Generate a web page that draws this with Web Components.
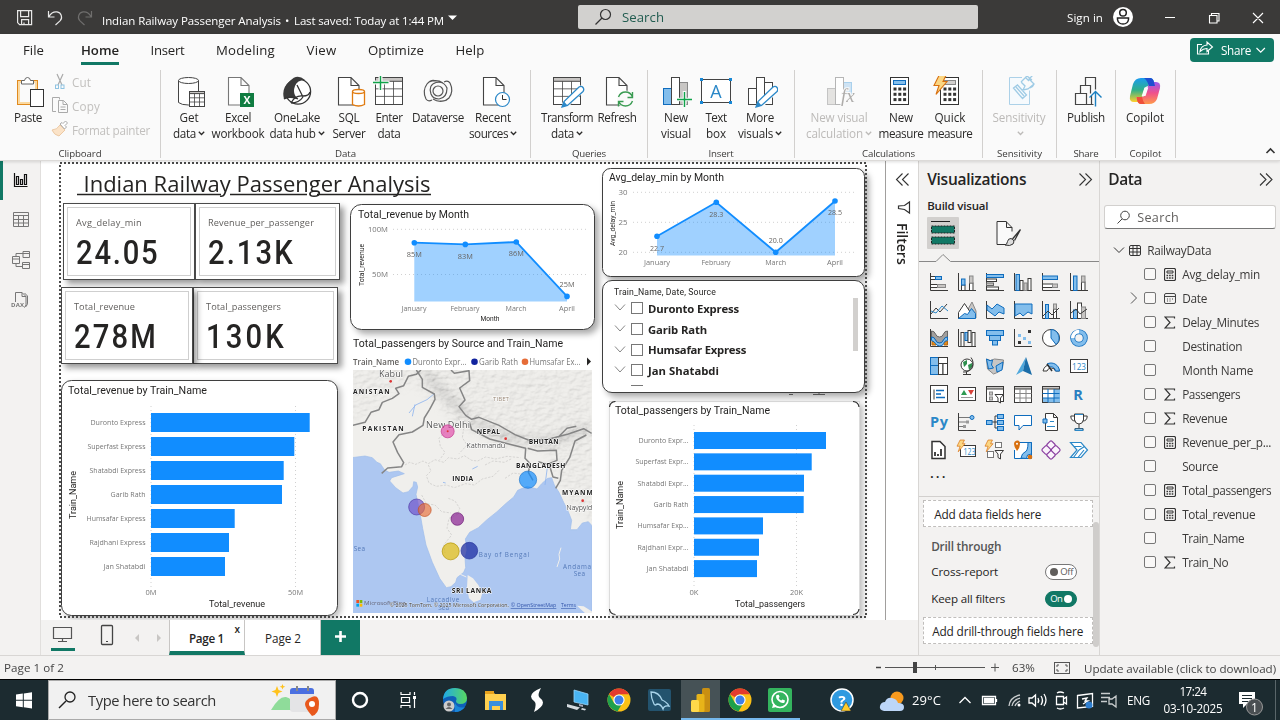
<!DOCTYPE html>
<html lang="en">
<head>
<meta charset="utf-8">
<title>Indian Railway Passenger Analysis</title>
<style>
html,body{margin:0;width:1280px;height:720px;overflow:hidden;background:#f3f2f1}
body{font-family:"Open Sans","Noto Sans",sans-serif;font-size:11.5px;color:#252423}
</style>
</head>
<body>
<report-app></report-app>
<script>
/* ---------- helpers ---------- */
const define = (name, css, html, ready) => customElements.define(name, class extends HTMLElement {
  constructor() {
    super();
    this.attachShadow({ mode: 'open' });
  }
  connectedCallback() {
    if (this.shadowRoot.childNodes.length) return;
    const tpl = document.createElement('template');
    tpl.innerHTML = `<style>:host{display:block;box-sizing:border-box}*{box-sizing:border-box}svg{display:block;flex:none}${css}</style>${typeof html === 'function' ? html(this) : html}`;
    this.shadowRoot.append(tpl.content.cloneNode(true));
    if (ready) ready(this);
  }
});
/* svg whose user space is window coordinates */
const P = (x, y, w, h, body, extra = '') => `<svg width="${w}" height="${h}" viewBox="${x} ${y} ${w} ${h}" fill="none" ${extra}>${body}</svg>`;
const T = (w, s, cls = '') => `<fit-text w="${w}" class="${cls}">${s}</fit-text>`;
/* svg text centred on cy */
const st = (x, cy, w, s, size, o = {}) => `<text x="${x}" y="${cy + size * (o.k || .36)}" font-size="${size}" ${w ? `textLength="${w}" lengthAdjust="${o.sp ? 'spacing' : 'spacingAndGlyphs'}"` : ''} text-anchor="${o.a || 'start'}" fill="${o.c || '#666462'}" ${o.e || ''}>${s}</text>`;
const DIN = 'font-family="Roboto"';

define('fit-text', ':host{display:inline-block;white-space:pre;flex:none}', '<slot></slot>', el => {
  const w = +el.getAttribute('w'), n = el.textContent.length;
  if (!w || !n) return;
  const nat = el.getBoundingClientRect().width;
  el.style.letterSpacing = ((w - nat) / n).toFixed(3) + 'px';
});

/* ---------- title bar ---------- */
define('title-bar', `
:host{display:flex;align-items:center;height:34px;background:#3b3a39;color:#fff}
.name{margin:6px 0 0 8px}.search{margin-left:120px;width:400px;height:24px;background:#d2d1cf;border-radius:2px;display:flex;align-items:center;color:#215c50;font-size:13.2px}
.search fit-text{margin-left:9px}.sign{margin-left:89px}`,
`${P(0,0,94,34,`<g stroke="#e8e8e8" stroke-width="1.2"><path d="M17.6 10.6h14v14h-12l-2-2zM20.6 10.6v6h8v-6M21.6 24.6v-5h7v5M24 24.5v-2"/><path d="M48.5 11v6h6M49 16.5c2-3.500 5-5 8-4.600 4.500.8 6 6 3 9L55.500 25"/></g><path stroke="#6f6e6d" stroke-width="1.200" d="M91.500 11v6h-6M91 16.500c-2-3.500-5-5-8-4.600-4.500.8-6 6-3 9L84.500 25"/>`)}
<div class="name">${T(179,'Indian Railway Passenger Analysis')}${T(13,' • ')}${T(150,'Last saved: Today at 1:44 PM')}</div>
${P(446,0,14,34,'<path d="M450 15.500h9l-4.500 4.500z" fill="#fff"/>')}
<div class="search">${P(591,5,22,24,'<circle cx="605.500" cy="14.500" r="5" stroke="#333" stroke-width="1.200"/><path d="M602 18l-6.500 6.500" stroke="#333" stroke-width="1.300"/>','style="margin-left:13px"')}${T(42,'Search')}</div>
${T(36,'Sign in','sign')}
${P(1103,0,177,34,`<circle cx="1123" cy="17" r="10" fill="#fff"/><g stroke="#222" stroke-width="1.500"><circle cx="1123" cy="12.700" r="3.300"/><path d="M1117.500 18h11v1.500c-1 6-10 6-11 0z"/></g><g stroke="#fff" stroke-width="1.100"><path d="M1165 17.500h10M1209.500 15.500h7.500v7.500h-7.500zM1211.500 15.500v-2h7.500v7.500h-2M1253 13l10 10M1263 13l-10 10"/></g>`)}`);

/* ---------- ribbon ---------- */
const table = (x, y, s, c = '#444', head = '#c8c6c4') => `<rect x="${x}" y="${y}" width="${s}" height="${s}" fill="#fff" stroke="${c}"/><rect x="${x}" y="${y}" width="${s}" height="${s * .14}" fill="${head}" stroke="${c}"/><path stroke="${c}" stroke-width=".8" d="M${x} ${y + s * .42}h${s}M${x} ${y + s * .7}h${s}M${x + s / 3} ${y + s * .14}v${s * .86}M${x + s * 2 / 3} ${y + s * .14}v${s * .86}"/>`;
const page = (x, c = '#444') => `<path d="M${x} 77.500h12.500l8 8v19.500h-20.500zM${x + 12.500} 77.500v8h8" fill="#fff" stroke="${c}" stroke-width="1.100"/>`;
const pencil = (x, y) => `<path d="M${x} ${y}l2-5.500 15-14.500q2.500-1.500 4 .5t0 4l-15.500 14z" fill="#fff" stroke="#2b88c8" stroke-width="1.300"/><path d="M${x} ${y}l2-5.500 3.500 4z" fill="#2b88c8"/>`;
const cal = (x, c = '#333') => { let d = ''; for (let r = 0; r < 3; r++) for (let k = 0; k < 3; k++) d += `<rect x="${x + 3 + k * 4.800}" y="${87.500 + r * 5.300}" width="3" height="3" fill="${c}"/>`; return `<rect x="${x}" y="77.500" width="18" height="27" fill="#fff" stroke="${c}"/><rect x="${x + 3}" y="80.500" width="12" height="4" fill="#83beec" stroke="#0f6cbd"/>${d}`; };
const bolt = (x, y, s) => `<path transform="translate(${x} ${y}) scale(${s})" d="M5 0h7L9 6h4L2 19l3-9H0z" fill="#fbd683" stroke="#d8700f" stroke-width="1.100"/>`;
const RI = {
paste:'<rect x="17.500" y="80.500" width="20" height="24" fill="#fafafa" stroke="#e08a1e"/><rect x="19" y="82" width="17" height="21" stroke="#fbd9a0" stroke-width="2"/><path d="M21.500 84v-3.500h3q.5-3 3-3t3 3h3v3.500z" fill="#fff" stroke="#666"/><rect x="30.500" y="89.500" width="13" height="17" fill="#fff" stroke="#333"/>',
get:`<path d="M178.500 80.500v22q3 2.500 10 2.500h10V80.500" fill="#fff" stroke="#444"/><ellipse cx="188.500" cy="80.500" rx="10" ry="3" fill="#fff" stroke="#444"/>${table(189.500,91.500,15)}`,
excel:`${page(228.500,'#777')}<rect x="240" y="93" width="14" height="14" fill="#107c41"/><text x="247" y="103.800" font-size="10.500" font-weight="700" text-anchor="middle" fill="#fff">X</text>`,
lake:'<circle cx="298" cy="91.500" r="12.600" stroke="#333" fill="#fff" stroke-width="1.300"/><path d="M290 81q7-8 15-1-8 0-10 6-3 8 3 13-9-2-14 0-3-11 6-18z" fill="#3a3a3a"/><path d="M284 99q6-4 14 0M297 85l6 12M291 103q4-8 12-7 6 0 7-4M291 103q8 0 12-6" stroke="#333" stroke-width="1.300"/>',
sql:`${page(338.500)}<path d="M352.500 91.500v13q6 3 12 0v-13" fill="#fff" stroke="#e07b10" stroke-width="1.300"/><ellipse cx="358.500" cy="91.500" rx="6" ry="2" fill="#fff" stroke="#e07b10" stroke-width="1.300"/>`,
enter:`${table(375.500,77.500,27)}<path d="M373.500 82.500h16M380.500 75v15" stroke="#fafafa" stroke-width="4"/><path d="M373 82.500h15.500M380.500 75v15" stroke="#10a34a" stroke-width="1.400"/>`,
verse:'<g stroke="#555" stroke-width="1.200"><circle cx="438" cy="91" r="5"/><path d="M431 94q-3-9 5-11.500 8-1.500 11 5.500 0 10-8 11-6 0-8-5M426 99q-4-8 1-15 4-5 9-3M450 83q4 8-1 15-4 4-9 3M429 82q8-3 14 1M447 100q-8 3-14-1M426 99q2 3 6 1M450 83q-2-3-6-1"/></g>',
recent:`${page(483.500)}<circle cx="502.500" cy="99.500" r="7" fill="#fff" stroke="#2b88c8" stroke-width="1.200"/><path d="M502.500 95v4.500h4" stroke="#333"/>`,
trans:`${table(553.500,77.500,27)}<path d="M564 106l20-19" stroke="#fafafa" stroke-width="7"/>${pencil(562,107)}`,
refresh:`${page(606.500)}<circle cx="625.500" cy="99" r="8.500" fill="#fafafa"/><path d="M618.500 97q2-5 7-5t7 5M632.500 92v5.500h-5M632.500 101q-2 5-7 5t-7-5M618.500 106.500v-5h5" stroke="#3a9b52" stroke-width="1.400"/>`,
newv:'<rect x="663.500" y="88.500" width="8" height="16" fill="#83beec" stroke="#0f6cbd"/><rect x="679.500" y="82.500" width="8" height="22" fill="#c8c6c4" stroke="#888"/><rect x="671.500" y="77.500" width="8" height="27" fill="#fff" stroke="#444"/><path d="M684.500 91v16M677 99.500h15" stroke="#fafafa" stroke-width="3.500"/><path d="M684.500 92v15M677 99.500h15" stroke="#10a34a" stroke-width="1.400"/>',
text:'<rect x="701.500" y="79.500" width="29" height="23" fill="#fff" stroke="#444"/><path d="M700 78h3v3h-3zM729 78h3v3h-3zM700 101h3v3h-3zM729 101h3v3h-3z" fill="#1888d6"/><text x="716" y="98" font-size="18" text-anchor="middle" fill="#2b88c8">A</text>',
more:`<rect x="748.500" y="88.500" width="8" height="16" fill="#fff" stroke="#444"/><rect x="764.500" y="82.500" width="8" height="22" fill="#fff" stroke="#444"/><rect x="756.500" y="77.500" width="8" height="27" fill="#fff" stroke="#444"/><path d="M759 106l18-18" stroke="#fafafa" stroke-width="7"/>${pencil(756,107)}`,
nvc:'<rect x="827.500" y="88.500" width="8" height="16" fill="#e1dfdd" stroke="#bbb"/><rect x="843.500" y="82.500" width="8" height="12" fill="#c7e0f4" stroke="#9cc9ea"/><rect x="835.500" y="77.500" width="8" height="27" fill="#fff" stroke="#aaa"/><text x="841" y="102" font-size="19" font-style="italic" font-family="Liberation Serif" fill="#a19f9d" stroke="#fafafa" stroke-width="2" paint-order="stroke">fx</text>',
measure:cal(890.500),
quick:`${cal(940.500)}<rect x="943.500" y="80.500" width="12" height="4" fill="#d2d0ce" stroke="#888"/>${bolt(934,75.500,1)}`,
sens:'<path d="M1022 77.500h-12.500v27h20v-14" stroke="#9fcbe6" fill="#f6fbfe"/><path d="M1013.500 88l4-3 9 10-4 3.500zM1016 87l8 9M1021 82l4 4-2 4 5-1 6-5-5-5 4-4M1025 77l4 4M1021 82l6-6 5 4M1030 88q3-1 4-4" stroke="#8fc3e2" stroke-width="1.300"/>',
publish:'<path d="M1075.500 104.500h11v-11h-11zM1080.500 93v-7.500h10v8M1086.500 104.500h7M1085.500 85v-7.500h10v12M1091.500 96v8" stroke="#444" stroke-width="1.200"/><path d="M1095.500 106.500V92M1089.500 97.500l6-6 6 6" stroke="#1b7fc0" stroke-width="1.400"/>',
copilot:'<defs><linearGradient id="ca" x1="0" y1="0" x2="0" y2="1"><stop offset="0" stop-color="#1a9bf0"/><stop offset=".5" stop-color="#2fb08a"/><stop offset="1" stop-color="#ffd02b"/></linearGradient><linearGradient id="cb" x1="0" y1="0" x2="0" y2="1"><stop offset="0" stop-color="#9b5cf0"/><stop offset=".5" stop-color="#f0508c"/><stop offset="1" stop-color="#ff9a4a"/></linearGradient></defs><path d="M1141 78h9q3 0 4 4l1 4h-6q-4 0-5 4l-2 8q-1 4-4 4h-4q-5 0-4-6l3-12q2-6 8-6z" fill="url(#ca)"/><path d="M1149 104h-8q-3 0-4-4l-1-3h5q4 0 5-4l2-7q1-4 4-4h4q5 0 4 6l-3 11q-2 5-8 5z" fill="url(#cb)"/><path d="M1144 78h6q3 0 4 4l1 4h-6q-2-6-5-8z" fill="#1f4fd0"/><path d="M1137 97h5q1 5 3 7h-4q-3 0-4-4z" fill="#ef4f3a"/><path d="M1144.500 87.500h3.800l-2.800 8.500h-3.800z" fill="#fafafa"/>'
};
const chev = '<svg class="c" width="7" height="5" viewBox="0 0 7 5" fill="none"><path d="M.8.8l2.700 2.700L6.200.8" stroke="currentColor" stroke-width="1.300"/></svg>';
define('ribbon-button', `
:host{display:flex;flex-direction:column;align-items:center;flex:none;padding-top:6px;font-size:11.700px;color:#2b2a29}
:host([off]){color:#bcbab8}:host([off]) .i{opacity:.85}
.l{height:16px;line-height:16px;display:flex;align-items:center;justify-content:center;white-space:nowrap}.l:first-of-type{margin-top:1px}.c{margin:1px 0 0 2px}`,
el => { const [i, c, w, ml, l1, w1, l2, w2, ch] = el.getAttribute('spec').split('|'); el.style.width = w + 'px'; el.style.marginLeft = ml + 'px';
 return `${P(c - 18,76,36,32,RI[i],'class="i"')}<div class="l">${T(w1, l1)}</div><div class="l">${l2 ? T(w2, l2) : ''}${ch ? chev : ''}</div>`; });
define('ribbon-group', `:host{display:flex;flex-direction:column;flex:none;height:88px;border-right:1px solid #d2d0ce}
.b{display:flex;height:76px;flex:none}.n{height:12px;flex:none;display:flex;justify-content:center;line-height:15px;font-size:9.700px;color:#3b3a39;white-space:nowrap}`,
el => { el.style.width = el.getAttribute('w') + 'px'; return `<div class="b"><slot></slot></div><div class="n">${T(el.getAttribute('nw'), el.getAttribute('name'))}</div>`; });
define('clip-actions', `:host{display:flex;flex-direction:column;margin-left:5px;color:#c2c0be;font-size:11.700px}
div{display:flex;align-items:center;height:24px}fit-text{margin-left:4px}`,
`<div>${P(51,71,17,24,'<path d="M57 75l5 11M63 75l-5 11" stroke="#aaa" stroke-width="1.200"/><rect x="55.500" y="86" width="3" height="3.500" stroke="#8fc3e2"/><rect x="61" y="86" width="3" height="3.500" stroke="#8fc3e2"/>')}${T(19,'Cut')}</div>
<div>${P(51,95,17,24,'<path d="M56 112.500h-3.500v-14h7v2M58.500 101.500h5l4 4v8h-9zM63 101.500v4h4M60.500 108h5M60.500 110.500h5" stroke="#aaa"/>')}${T(28,'Copy')}</div>
<div>${P(51,119,17,24,'<path d="M60 126l5 5-6 6q-5-1-7-6 5 0 8-5z" fill="#fbe3c8" stroke="#ecc9a4"/><path d="M60 125l2-1.500 1 1 2.500-2.500 2 2-2.500 2.500 1.500 1.500-2 2z" fill="#fff" stroke="#aaa"/>')}${T(78,'Format painter')}</div>`);
const rb = (s, off) => `<ribbon-button ${off ? 'off' : ''} spec="${s}"></ribbon-button>`;
define('app-ribbon', `
:host{height:127px;background:#fafafa;border-bottom:1px solid #dcdad8;box-shadow:0 1px 3px #0002;position:relative;z-index:2;display:flex;flex-direction:column}
.tabs{display:flex;height:36px;align-items:flex-start;font-size:13.200px;flex:none}.tabs>*{margin-left:31.500px;height:31px;line-height:33px;border-bottom:3px solid transparent}.tabs>.on{font-weight:600;border-color:#117865}
.tabs>:first-child{margin-left:23px}
.share{margin:4px 6px 0 auto!important;width:84px;height:24px!important;border:0!important;line-height:24px!important;border-radius:4px;background:#117865;color:#fff;display:flex;align-items:center;font-size:11.700px}
.g{display:flex}.up{margin:72px 0 0 auto}`,
`<div class="tabs">${T(21,'File')}<fit-text w="38" class="on" style="margin-left:37px">Home</fit-text>${T(34,'Insert')}${T(59,'Modeling')}${T(30,'View')}${T(56,'Optimize')}${T(29,'Help')}
<div class="share">${P(1190,38,31,24,'<path d="M1202 44.500h-4.500v9.500h11v-3M1200 51.500q1-6 7-6.500v-3l5.500 5-5.500 4.500v-3q-4 0-7 3z" stroke="#fff" stroke-width="1.100"/>')}${T(30,'Share')}${P(1251,38,18,24,'<path d="M1256.500 48l4.200 4.200 4.200-4.200" stroke="#fff" stroke-width="1.200"/>')}</div></div>
<div class="g">
<ribbon-group w="161" name="Clipboard" nw="43">${rb('paste|28|36|10|Paste|28')}<clip-actions></clip-actions></ribbon-group>
<ribbon-group w="370" name="Data" nw="21">${rb('get|189|44|6|Get|19|data|23|1')}${rb('excel|238|54|0|Excel|26|workbook|53')}${rb('lake|297|60|2|OneLake|46|data hub|46|1')}${rb('sql|349|40|2|SQL|21|Server|33')}${rb('enter|389|36|2|Enter|27|data|23')}${rb('verse|438|56|3|Dataverse|52')}${rb('recent|493|52|1|Recent|36|sources|39|1')}</ribbon-group>
<ribbon-group w="117" name="Queries" nw="34">${rb('trans|567|56|8|Transform|52|data|23|1')}${rb('refresh|617|40|2|Refresh|39')}</ribbon-group>
<ribbon-group w="147" name="Insert" nw="25">${rb('newv|676|34|11|New|24|visual|30')}${rb('text|716|34|6|Text|21|box|20')}${rb('more|760|48|3|More|28|visuals|35|1')}</ribbon-group>
<ribbon-group w="188" name="Calculations" nw="53">${rb('nvc|839|70|9|New visual|57|calculation|57|1',1)}${rb('measure|901|48|3|New|24|measure|45')}${rb('quick|950|48|1|Quick|31|measure|45')}</ribbon-group>
<ribbon-group w="74" name="Sensitivity" nw="45">${rb('sens|1019|60|6|Sensitivity|53||0|1',1)}</ribbon-group>
<ribbon-group w="59" name="Share" nw="25">${rb('publish|1086|46|6|Publish|38')}</ribbon-group>
<ribbon-group w="60" name="Copilot" nw="32">${rb('copilot|1145|46|6|Copilot|38')}</ribbon-group>
<div class="up">${P(1264,142,16,16,'<path d="M1266.500 153l4-4 4 4" stroke="#333" stroke-width="1.600"/>')}</div></div>`);

/* ---------- left rail ---------- */
define('nav-rail', `:host{width:41px;border-right:1px solid #e1dfdd;background:#f3f2f1}.a{border-left:3px solid #117865;height:39px}.a svg{margin-left:-3px}`,
`<div class="a">${P(0,161,40,39,'<path d="M14.500 173v13.500h13M16.500 184.500h2v-8h-2zM20.500 184.500h2v-5h-2zM24.500 184.500h2v-10h-2z" stroke="#111" stroke-width="1.200"/>')}</div>
${P(0,200,40,120,'<g stroke="#777"><path d="M13.500 212.500h15v14h-15zM13.500 215.500h15M13.500 219.500h15M13.500 223h15M18.500 215.500v11M23.500 215.500v11M23 251.500h6.500v6H23zM23 253.500h6.500M12.500 256.500h7v7h-7zM12.500 259h7M22.500 262.500h7v6h-7zM22.500 264.500h7M16 256v-2.500h7M16 264v2.500h6.500"/><path d="M15.500 302v-9.500h6.500l4 4v8q0 2-2 3M22 292.500v4h4M24.500 293l3 3v7q0 2-2 4"/></g><text x="11" y="307" font-size="6" font-weight="700" fill="#777" textLength="13">DAX</text>')}`);

/* ---------- report canvas ---------- */
define('kpi-card', `:host{border:1px solid #4a4a4a;background:#fff;padding:3px;height:77px;box-shadow:4px 4px 6px #0006}
.in{border:1px solid #cfcfcf;height:69px;padding:8px 0 0 8px;display:flex;flex-direction:column;align-items:flex-start}
.n{font-size:9.200px;line-height:14px;color:#605e5c}svg{margin-top:4px}`,
el => `<div class="in"><fit-text class="n" w="${el.getAttribute('nw')}">${el.getAttribute('name')}</fit-text><svg width="120" height="32"><text transform="scale(.86 1)" x="0" y="30" ${DIN} font-size="34" fill="#252423" font-weight="500" textLength="${el.getAttribute('vw') / .86 + 2}" lengthAdjust="spacing">${el.getAttribute('value')}</text></svg></div>`);

define('area-chart', ':host{filter:drop-shadow(4px 4px 3px #0005)}', el => {
  const d = el.id === 'rev' ? { x:350,y:204,w:245,h:126,r:11,title:'Total_revenue by Month',tx:358,ty:214.5,tw:111,ax:388,yl:[['100M',229.3,20],['50M',274.5,16]],g:[393,586],pts:[[414.3,242.7],[465.3,244.4],[516.3,242],[567,296.4]],base:301.5,lab:[['85M',254,15],['83M',256,15],['86M',253.5,15],['25M',284,15]],my:308,mx:[[414,25],[465,29],[516,21],[567,16]],yt:['Total_revenue',361,265,42],xt:['Month',490,318.5,19] }
  : { x:602,y:168,w:263,h:109,r:8,title:'Avg_delay_min by Month',tx:609,ty:177.5,tw:115,ax:627.5,yl:[['30',192.3,9],['25',222.3,9],['20',252.3,9]],g:[633,857],pts:[[657,236.3],[716.3,202.3],[775.7,252.3],[835,201]],base:255.5,lab:[['22.7',248,14],['28.3',214,14],['20.0',240,14],['28.5',212,14]],my:262,mx:[[657,26],[716,29],[775.7,21],[835,16]],yt:['Avg_delay_min',612,223.5,45] };
  const p = d.pts.map(a => a.join(' ')).join('L');
  return P(d.x,d.y,d.w,d.h,`<rect x="${d.x+.5}" y="${d.y+.5}" width="${d.w-1}" height="${d.h-1}" rx="${d.r}" fill="#fff" stroke="#3f3f3f"/>
  ${st(d.tx,d.ty,d.tw,d.title,10.8,{c:'#252423',e:DIN})}
  ${d.yl.map(l => st(d.ax,l[1],l[2],l[0],8,{a:'end',c:'#777'}) + `<path d="M${d.g[0]} ${l[1]}H${d.g[1]}" stroke="#d0d0d0" stroke-dasharray="1 3"/>`).join('')}
  <path d="M${p}V${d.base}H${d.pts[0][0]}z" fill="#118dff" fill-opacity=".4"/><path d="M${p}" stroke="#118dff" stroke-width="1.800"/>
  ${d.pts.map((q,i) => `<circle cx="${q[0]}" cy="${q[1]}" r="2.800" fill="#118dff"/>${st(q[0],d.lab[i][1],d.lab[i][2],d.lab[i][0],8,{a:'middle'})}${st(d.mx[i][0],d.my,d.mx[i][1],['January','February','March','April'][i],8,{a:'middle',c:'#777'})}`).join('')}
  <g transform="translate(${d.yt[1]} ${d.yt[2]}) rotate(-90)">${st(0,0,d.yt[3],d.yt[0],7.2,{a:'middle',c:'#252423',e:DIN})}</g>
  ${d.xt ? st(d.xt[1],d.xt[2],d.xt[3],d.xt[0],7.2,{a:'middle',c:'#252423',e:DIN}) : ''}`);
});
define('bar-chart', ':host{filter:drop-shadow(3px 3px 3px #0004)}', el => {
  const one = el.id === 'rev';
  const d = one ? { x:61,y:380,w:277,h:236,title:'Total_revenue by Train_Name',tx:68,ty:390,tw:139,x0:151,ends:[309.7,294.3,283.7,282,234.7,229,225],t0:413,p:24,h2:19,lx:145.5,names:[['Duronto Express',55],['Superfast Express',58],['Shatabdi Express',56],['Garib Rath',35],['Humsafar Express',59],['Rajdhani Express',56],['Jan Shatabdi',42]],ticks:[['0M',151,11],['50M',295.500,15]],gy:[406,588],xt:['Total_revenue',237,604,56],yt:[73,495,48] }
  : { x:609,y:401,w:251,h:215,title:'Total_passengers by Train_Name',tx:615,ty:410.5,tw:155,x0:694,ends:[826,811.7,804,803.7,763,759,757],t0:432,p:21.35,h2:17,lx:688.5,names:[['Duronto Expr...',50],['Superfast Expr...',53],['Shatabdi Expr...',51],['Garib Rath',35],['Humsafar Exp...',51],['Rajdhani Expr...',51],['Jan Shatabdi',42]],ticks:[['0K',694,9],['20K',796.500,13]],gy:[425,587],xt:['Total_passengers',770,604,70],yt:[620,505,48] };
  const frame = one ? `<rect x="61.500" y="380.500" width="276" height="235" rx="10" fill="#fff" stroke="#3f3f3f"/>` : `<path d="M609 401h250v214H609z" fill="#fff"/><path d="M609.500 401v214M859.500 401v214M609 401.500h250" stroke="#dcdcdc"/><path d="M609.500 407q.5-5 6-5.500M853 401.500q5.500.5 6 5.500M609.500 609q.5 5 6 5.500M853 614.500q5.500-.5 6-5.500" stroke="#333" stroke-width="1.200"/>`;
  return P(d.x,d.y,d.w,d.h,`${frame}${st(d.tx,d.ty,d.tw,d.title,10.8,{c:'#252423',e:DIN})}
  ${d.ticks.map(t => `<path d="M${t[1]} ${d.gy[0]}V${d.gy[1]}" stroke="#d0d0d0" stroke-dasharray="1 3"/>${st(t[1],592,t[2],t[0],8,{a:'middle',c:'#777'})}`).join('')}
  ${d.names.map((n,i) => `<rect x="${d.x0}" y="${d.t0+i*d.p}" width="${d.ends[i]-d.x0}" height="${d.h2}" fill="#118dff"/>${st(d.lx,Math.floor(d.t0+i*d.p+d.h2/2),n[1],n[0],8,{a:'end',c:'#777'})}`).join('')}
  ${st(d.xt[1],d.xt[2],d.xt[3],d.xt[0],8.5,{a:'middle',c:'#252423',e:DIN})}
  <g transform="translate(${d.yt[0]} ${d.yt[1]}) rotate(-90)">${st(0,0,d.yt[2],'Train_Name',8.5,{a:'middle',c:'#252423',e:DIN})}</g>`);
});
define('train-slicer', `:host{width:263px;height:113px;border:1px solid #3f3f3f;border-radius:10px;background:#fff;box-shadow:4px 4px 6px #0005;overflow:hidden;padding:5px 0 0 11px}
.h{font:8.700px/12px Roboto;color:#252423;display:flex;height:12px}.r{display:flex;align-items:center;height:20.700px;font-weight:700;font-size:11.300px;color:#252423}
.l{height:88px;overflow:hidden}.r i{width:12px;height:12px;border:1px solid #777;margin:0 5px}.bar{position:absolute;right:6px;top:17px;width:5px;height:53px;background:#d2d0ce}`,
`<div class="h">${T(102,'Train_Name, Date, Source')}</div><div class="l">${[['Duronto Express',91],['Garib Rath',59],['Humsafar Express',98],['Jan Shatabdi',71],['','']].map(r => `<div class="r"><svg width="12" height="12" fill="none"><path d="${r[0] ? 'M1 2.500l5 5.500L11 2.500' : ''}" stroke="#888"/></svg><i></i>${r[0] ? T(r[1], r[0]) : ''}</div>`).join('')}</div><div class="bar"></div>`);

/* map drawn at three units per pixel */
define('bubble-map', ':host{background:#fff}', `
${P(353,336,240,34,`${st(353,343,210,'Total_passengers by Source and Train_Name',10.800,{c:'#252423',e:DIN})}
${st(353,362,46,'Train_Name',8.200,{c:'#605e5c',e:'font-weight="600"'})}<circle cx="408" cy="361.700" r="3.300" fill="#118dff"/>${st(412.500,362,54,'Duronto Expr...',8.300,{c:'#777'})}<circle cx="474.500" cy="361.700" r="3.300" fill="#12239e"/>${st(479,362,39,'Garib Rath',8.300,{c:'#777'})}<circle cx="525" cy="361.700" r="3.300" fill="#e66c37"/>${st(529.500,362,51,'Humsafar Ex...',8.300,{c:'#777'})}<path d="M587 357.500l4 4-4 4z" fill="#252423"/>`)}
<svg width="239" height="243" viewBox="24 15 717 729" fill="none">
<defs><filter id="relief" x="0" y="0" width="100%" height="100%"><feTurbulence type="fractalNoise" baseFrequency=".05 .08" numOctaves="4" seed="8" result="n"/><feDiffuseLighting in="n" surfaceScale="7" lighting-color="#fff"><feDistantLight azimuth="230" elevation="55"/></feDiffuseLighting></filter>
<filter id="soft" x="-20%" y="-20%" width="140%" height="140%"><feGaussianBlur stdDeviation="12"/></filter>
<mask id="hills" maskUnits="userSpaceOnUse" x="24" y="15" width="717" height="729"><g filter="url(#soft)"><path fill="#666" d="M0 -10H741V250L700 190 640 230 560 240 500 245 440 225 380 195 330 180 290 130 240 90 200 50 150 80 100 110 60 150 0 180zM600 250L760 200V480L690 430 640 340z"/><path stroke="#ddd" stroke-width="30" d="M240 20l60 70 70 70 30 20 60 30 70 20 60 5 60-10 50-30 60 0"/></g></mask></defs>
<path fill="#f0efec" d="M24 15h717v729H24z"/>
<g mask="url(#hills)" opacity=".5" style="mix-blend-mode:multiply"><path fill="#fff" d="M24 15h717v729H24z" filter="url(#relief)"/></g>
<path stroke="#999" stroke-width="22" opacity=".3" filter="url(#soft)" d="M240 20l60 70 70 60M380 175l80 30 70 22M550 225l60 5 60-18 60-20"/>
<path fill="#adc7f1" stroke="#9fbcea" stroke-width="2" d="M20 278L60 273 82 278 96 292 106 296 118 314 132 322 160 318 178 326 140 338 134 348 152 368 174 384 190 380 204 364 206 350 214 352 218 366 213 388 218 410 226 450 233 490 243 540 262 592 284 640 304 668 318 665 332 652 336 638 356 622 362 608 360 580 366 555 361 522 374 502 400 488 426 464 456 440 482 416 506 396 518 376 546 364 576 372 590 356 608 340 620 338 628 360 642 382 656 412 670 440 680 466 676 494 696 494 712 474 730 470 741 482V750H20z"/>
<path fill="#f0efec" d="M368 630L384 640 400 660 412 684 406 704 386 712 372 700 366 668zM696 722l20 2 26 16v6h-20z"/>
<path stroke="#f0efec" stroke-width="3" d="M648 548l-6 20 2 14-8 24M346 628l18 8"/>
<g stroke="#c8c7c5" stroke-width="2" stroke-dasharray="7 4"><path d="M180 300l14-8 18 6 22-10 16 8 20-12 26 8 14-14 28 4 20-10 22 14 18 2 24-12 30 6 34-8 40 4M250 300l8 18-14 14 8 22 22 10 30-4 24 8 34-12 26 4 24-18 32-8 20-20M310 400l20 8 14 22-6 18-26 12-6 30 14 20-24 30 4 24M420 300l24-12 34 4 24-12M230 390l14 26 26 4 20 20 28 4M300 200l-18 20 4 24 14 18-16 22M480 340l24-16 30 4 16-10M340 160l16 30-4 28 14 22-24 26"/></g>
<path stroke="#8fb4ee" stroke-width="2.500" d="M268 86l-22 18-34 16-20 24M210 118l-8 36M382 312l16-8M294 352l8 2M600 360l8-60"/>
<g stroke="#858585" stroke-width="4.500" stroke-linejoin="round"><path d="M20 182l40-10 18-30 24-8 10-22 30-12 20-14-10-16 24-8 14-28 24-6 14-13M214 15l18 28 0 24 36 20 2 16-16 30-16 26-4 22-32 20-40 8-18 22 14 32 18 30-6 12-42 4-18 16"/><path d="M318 15l10 10 44-8 2 30-30 22 16 36-18 20 20 26 18 12 22-6 60 24 48 28 40 16 60-2 60-16 46-16 24 14M372 168l8 26 54 28 60 16 48 12-2 30 16 16-6 26 14 24M548 250l30 8 56-2 2 30-24 10 12 40 16 4M580 290l42 12M724 210l-34 18-16 50-24 38-4 30-14 24M640 216l26-26 28-6"/></g>
<g font-family="Open Sans" stroke="#fff" stroke-width="3" paint-order="stroke" stroke-linejoin="round">
${[['ANISTAN',24,81,110],['PAKISTAN',52,190,124],['NEPAL',395,201,70],['BHUTAN',551,231,90],['INDIA',322,340,62],['BANGLADESH',513,302,148],['MYANMAR',651,382,125],['SRI LANKA',320,676,119]].map(m => st(m[1],m[2],m[3],m[0],20,{sp:1,c:'#222',e:'font-weight="700"'})).join('')}
${[['Kabul',102,27,72,27],['New Delhi',243,178,132,27],['Kathmandu',364,242,117,22],['Naypyidaw',664,426,105,22]].map(m => st(m[1],m[2],m[3],m[0],m[4],{sp:1,c:'#555'})).join('')}${st(444,104,48,'TIBET',15,{c:'#987'})}</g>
<g fill="#d33"><circle cx="137" cy="49" r="4"/><circle cx="482" cy="221" r="4"/><circle cx="713" cy="407" r="4"/></g>
${[['Bay of Bengal',401,570,152],['Andaman',654,605,98],['Sea',686,626,34],['Sea',26,552,34],['Laccadive',245,704,98],['Sea',280,728,32]].map(m => st(m[1],m[2],m[3],m[0],19,{sp:1,c:'#5479b8'})).join('')}
<g stroke-width="2"><circle cx="308" cy="199" r="19.500" fill="#e044a7" fill-opacity=".65" stroke="#c0358c"/><circle cx="549" cy="344" r="26" fill="#118dff" fill-opacity=".7" stroke="#2277cc"/><circle cx="215" cy="426" r="24" fill="#6b4bc8" fill-opacity=".65" stroke="#5240a8"/><circle cx="239" cy="435" r="19.500" fill="#e66c37" fill-opacity=".65" stroke="#c25020"/><circle cx="337" cy="462" r="19" fill="#871f91" fill-opacity=".7" stroke="#6b1a74"/><circle cx="317" cy="559" r="25.500" fill="#d9b300" fill-opacity=".65" stroke="#b09200"/><circle cx="373" cy="557" r="25" fill="#12239e" fill-opacity=".7" stroke="#25349a"/></g><circle cx="308" cy="199" r="3" fill="#d33"/>
<path fill="#f25022" d="M34 705h8v9h-8z"/><path fill="#7fba00" d="M44 705h8v9h-8z"/><path fill="#00a4ef" d="M34 716h8v9h-8z"/><path fill="#ffb900" d="M44 716h8v9h-8z"/>
${st(57,715,125,'Microsoft Bing',17,{c:'#667'})}${st(134,720,358,'© 2025 TomTom, © 2025 Microsoft Corporation,',18,{c:'#333',e:'stroke="#fff" stroke-width="1" paint-order="stroke"'})}${st(497,720,137,'© OpenStreetMap',18,{c:'#3355aa',e:'text-decoration="underline"'})}${st(648,720,45,'Terms',18,{c:'#3355aa',e:'text-decoration="underline"'})}
</svg>`);

define('report-canvas', `:host{position:relative;height:459px;background:#fff;overflow:hidden}
kpi-card,area-chart,bar-chart,train-slicer,bubble-map,.a{position:absolute}`,
() => { const at = (x, y) => `style="left:${x - 41}px;top:${y - 161}px"`, at2 = (x, y, w) => `style="left:${x - 41}px;top:${y - 161}px;width:${w}px"`;
return `<div class="a" ${at(77,169)}>${P(77,169,360,32,`<text x="83.500" y="192.300" font-size="22" fill="#252423" textLength="347" lengthAdjust="spacingAndGlyphs">Indian Railway Passenger Analysis</text><path d="M77 194.500H221M230 194.500H307M317 194.500H431" stroke="#252423" stroke-width="1.300"/>`)}</div>
<bubble-map ${at(353,336)}></bubble-map>
<kpi-card ${at2(63,203,132)} name="Avg_delay_min" nw="66" value="24.05" vw="80"></kpi-card><kpi-card ${at2(195,203,145)} name="Revenue_per_passenger" nw="106" value="2.13K" vw="83"></kpi-card>
<kpi-card ${at2(193,287,145)} name="Total_passengers" nw="75" value="130K" vw="76"></kpi-card><kpi-card ${at2(61,287,132)} name="Total_revenue" nw="61" value="278M" vw="80"></kpi-card>
<area-chart id="rev" ${at(350,204)}></area-chart><area-chart id="delay" ${at(602,168)}></area-chart>
<bar-chart id="rev" ${at(61,380)}></bar-chart><bar-chart id="pas" ${at(609,401)}></bar-chart>
<train-slicer ${at(602,280)}></train-slicer>
<div class="a" style="left:0;top:0">${P(41,161,844,459,'<rect x="60" y="163" width="806" height="454" stroke="#4a4a4a" stroke-width="2" stroke-dasharray="2 2"/><path d="M789 394.500h4M813 394.500h12M819 393v2" stroke="#555"/>')}</div>`; });

define('page-tabs', `:host{display:flex;height:35px;background:#f3f2f1;font-size:11.700px}
.p{width:76px;height:35px;background:#fff;border-right:1px solid #c8c6c4;display:flex;align-items:center;padding:0 0 0 20px;position:relative}.on{border-left:1px solid #c8c6c4;border-bottom:4px solid #117865;font-weight:600;padding-top:4px;padding-left:19px}
.x{position:absolute;right:4px;top:1px;font-size:10px;line-height:16px}.add{width:39px;background:#117865}`,
`${P(41,620,128,35,'<path d="M53.500 627.500h18v11h-18zM62.500 638.500v3M58 641.500h9" stroke="#555" stroke-width="1.200"/><path d="M51 648h24v3H51z" fill="#117865"/><rect x="101.500" y="625.500" width="11" height="19" rx="1" stroke="#444" stroke-width="1.300"/><path d="M106 641.500h2" stroke="#444"/><path d="M139 634v8l-4-4zM157 634v8l4-4z" fill="#c8c6c4"/>')}
<div class="p on">${T(35,'Page 1')}<span class="x">x</span></div><div class="p">${T(36,'Page 2')}</div><div class="add">${P(321,620,39,35,'<path d="M335 636.500h11M340.500 631v11" stroke="#fff" stroke-width="2.600"/>')}</div>`);

/* ---------- panes ---------- */
define('filters-pane', `:host{width:33px;height:459px;border-left:1px solid #a19f9d;background:#fff}.v{writing-mode:vertical-rl;font-weight:600;font-size:14px;line-height:20px;margin:2px 0 0 6px}`,
`${P(886,161,32,60,'<path d="M902.500 173.500l-6 6 6 6M908.500 173.500l-6 6 6 6" stroke="#333" stroke-width="1.100"/><path d="M909.500 202v11l-5-3.500-6-1v-2.500l6-.5z" stroke="#333" stroke-width="1.200"/>')}<div class="v">Filters</div>`);

const B='#0f6cbd', L='#83beec', K='#3b3a39', G='#c8c6c4';
const r = (x,y,w,h,f='#fff',s=K) => `<rect x="${x}" y="${y}" width="${w}" height="${h}" fill="${f}" stroke="${s}"/>`;
const ax = '<path d="M.5 0v17.500H18" stroke="#3b3a39"/>';
const fun = '<path d="M9 9.500h8.500l-3 3.500v5l-2.500-1.500V13z" fill="#fff" stroke="#3b3a39"/>';
const V = [
 ax+r(.5,3.5,5,3)+r(5.5,3.5,6,3,L,B)+r(.5,11.500,7,3)+r(7.500,11.500,8,3,G,'#888'),
 ax+r(3.500,12,3.500,5.500)+r(3.500,6,3.500,6,L,B)+r(11.500,10,3.500,7.500)+r(11.500,3,3.500,7,G,'#888'),
 ax+r(.5,1.500,17,3,L,B)+r(.5,6,10,2.500)+r(.5,10,7,2.500,G,'#666')+r(.5,14,12,3),
 ax+r(2,1.500,3.500,16,L,B)+r(6,7.500,3,10)+r(10,10,3,7.500,G,'#888')+r(14,5.500,3,12),
 ax+r(.5,3,15,3.500,L,B)+r(.5,11,10,3.500)+r(10.500,11,5,3.500,G,'#888'),
 ax+r(3.500,3,3.500,14.500,L,B)+r(11.500,9,3.500,8.500)+r(11.500,3,3.500,6,G,'#888'),
 ax+'<path d="M1 13l5-6 4 4 7-8" stroke="#3b3a39"/><path d="M1 10l5 2 6-7 6 5" stroke="#2b88c8"/>',
 '<path d="M8 12l6-11 4 9v7z" fill="#c8c6c4" stroke="#888"/><path d="M.5 17.500v-6l6-9 6 9v6z" fill="#fff" stroke="#3b3a39"/><path d="M.5 17.500l6-5 3 1 4-6 4 5v5z" fill="#83beec" stroke="#0f6cbd"/>',
 ax+'<path d="M1 4l5 4 5-5 7 4v6l-5-2-4 4-8-6z" fill="#83beec" stroke="#0f6cbd"/>',
 ax+'<path d="M1 3h17v10l-4-2-5 4-3-3-5 3z" fill="#83beec" stroke="#0f6cbd"/>',
 ax+r(3.500,3.500,3,14,L,B)+r(11.500,8,3,9.500)+r(11.500,3,3,5,G,'#888')+'<path d="M1 15l5-5 4 4 7-7" stroke="#3b3a39"/>',
 ax+r(3.500,9,4,8.500,L,B)+r(7.500,2,4,15.500)+r(11.500,6,4,11.500,G,'#888')+'<path d="M1 12l5-4 4 5 7-5" stroke="#3b3a39"/>',
 '<path d="M.5 0v17.500H18" stroke="#3b3a39"/><path d="M1.500 2q3 0 4 3t4 3 4-3 4-3v6q-3 0-4 3t-4 3-4-3-4-3z" fill="#a19f9d" stroke="#666"/><path d="M2 12h4v4H2zM14 12h3.500v4H14z" fill="#e08a1e" stroke="#b86a10"/><path d="M1.500 8q3 0 4 3t4 3 4-3 4-3v3.500q-3 0-4 3t-4 2.500-4-2.500-4-3z" fill="#83beec" stroke="#0f6cbd"/>',
 ax+r(3,3.500,3,14)+r(7,3.500,3,8,L,B)+r(10,1.500,3,12)+r(14,3.500,3,14),
 r(.5,1.500,17,5,L,B)+r(3.500,6.500,11,5,L,B)+r(6.500,11.500,5,4.500,L,B),
 ax+'<g fill="#83beec"><path d="M4 5h3v3H4zM9 8h3v3H9zM14 12h3v3h-3z"/></g><path d="M14 1h3v3h-3zM4 12h3v3H4z" fill="#333"/>',
 '<circle cx="9" cy="9" r="8.500" fill="#fff" stroke="#3b3a39"/><path d="M9 9V.5a8.500 8.500 0 0 1 5 15z" fill="#83beec" stroke="#0f6cbd"/>',
 '<circle cx="9" cy="9" r="6.300" stroke="#0f6cbd" stroke-width="5"/><circle cx="9" cy="9" r="6.300" stroke="#83beec" stroke-width="3.400"/><path d="M9 2.500A6.300 6.300 0 0 0 2.700 9" stroke="#fff" stroke-width="3.400"/>',
 r(.5,.5,8,8,L,B)+r(8.500,.5,9,6)+r(.5,8.500,8,9,L,B)+r(8.500,6.500,4.500,11)+r(13,6.500,4.500,11),
 '<circle cx="9" cy="8" r="6" fill="#fff" stroke="#3b3a39"/><path d="M5 5l4-2v4l-3 3zM10 8l4-2v4l-3 3z" fill="#2f8f4e"/><path d="M13 .5a9 9 0 0 1-8 14.500M8.500 15v2.500M5 17.500h8" stroke="#3b3a39"/>',
 '<path d="M.5 2q4 3 8 0l9 1-1 8-4 4-5 2-6-5z" fill="#c8c6c4" stroke="#888"/><path d="M.5 2q4 3 6 1l-1 5 2 3-5 1zM10 9l7-4-1 8-5 2z" fill="#83beec" stroke="#0f6cbd"/>',
 '<path d="M12 0L2 18l7-4z" fill="#4fa8dc"/><path d="M12 0l6 18-9-4z" fill="#1b6da8"/>',
 '<path d="M1 14a8.500 8.500 0 0 1 16.500 0h-4a4.500 4.500 0 0 0-8.500 0z" fill="#fff" stroke="#3b3a39"/><path d="M5 7a8.500 8.500 0 0 1 12.500 7h-4a4.500 4.500 0 0 0-6-4z" fill="#83beec" stroke="#0f6cbd"/><path d="M5 7l5 7" stroke="#333" stroke-width="1.500"/>',
 r(.5,2.500,17,13)+'<text x="9" y="12.500" font-size="9.500" text-anchor="middle" fill="#2b88c8" textLength="14" lengthAdjust="spacingAndGlyphs">123</text>',
 r(.5,.5,17,17)+'<path d="M4 4.500v10" stroke="#3b3a39"/><path d="M6 5.500h8M6 9h5M6 12.500h9" stroke="#0f6cbd" stroke-width="1.600"/>',
 r(.5,2.500,17,13)+'<path d="M3 10l3-5 3 5z" fill="#2f9b52"/><path d="M10 5h6l-3 5z" fill="#d8423a"/><path d="M3 12.500h12" stroke="#999"/>',
 r(.5,1.500,17,15)+r(.5,1.500,17,2.500,G)+r(3.500,7,3,3,G,'#888')+r(3.500,12,3,3,G,'#888')+fun,
 r(.5,1.500,17,16)+r(.5,1.500,17,2.500,G)+'<path d="M.5 8.500h17M.5 13h17M6 4v13.500M12 4v13.500" stroke="#888"/>',
 r(.5,1.500,17,16)+'<path d="M6 13h12v4.500H6zM12 4h6v9h-6z" fill="#83beec"/><path d="M1 13h5v4H1z" fill="#83beec"/>'+r(.5,1.500,17,2.500,G)+'<path d="M.5 8.500h17M.5 13h17M6 4v13.500M12 4v13.500" stroke="#0f6cbd"/>',
 '<text x="8" y="14.500" font-size="14.500" font-weight="700" text-anchor="middle" fill="#2b7fc0">R</text>',
 '<text x="9" y="14" font-size="14.500" font-weight="700" text-anchor="middle" fill="#2b88c8" textLength="18">Py</text>',
 ax+'<path d="M1 4.500h11M1 9h7M1 13.500h4" stroke="#777"/><circle cx="14" cy="4.500" r="2" fill="#83beec" stroke="#0f6cbd"/><rect x="8" y="7.500" width="3" height="3" fill="#999"/><rect x="5" y="12" width="3" height="3" fill="#999"/>',
 '<path d="M6 9h6M9 3h3M9 15h3M9 3v12" stroke="#3b3a39"/>'+r(.5,7.500,5.500,4,L,B)+r(11.500,1.500,6,4,L,B)+r(11.500,7.500,6,4,L,B)+r(11.500,13.500,6,4,L,B),
 '<path d="M.5 2.500h17v10H9l-4 4.500v-4.500H.5z" fill="#fff" stroke="#0f6cbd"/>',
 '<path d="M3.500 17.500V.5h8l4 4v13zM11.500.5v4h4" fill="#fff" stroke="#3b3a39"/><path d="M1 6h4v4H1z" fill="#83beec" stroke="#0f6cbd"/><path d="M8 8.500h4M5 13.500h8" stroke="#2b88c8"/>',
 '<path d="M4.500 1h9v6q-1 4-4.500 4T4.500 7zM4.500 3H.8q0 5 4.500 5M13.500 3h3.700q0 5-4.500 5M9 11v4M5 17.500v-2h8v2z" fill="#fff" stroke="#3b3a39"/><path d="M5 16h8v1.500H5zM5 1.500h8" stroke="#2b88c8"/>',
 '<path d="M2 17.500V.5h8l5 5v12z" fill="#fff" stroke="#333" stroke-width="1.500"/><path d="M5 15v-4M8 15v-2M11 15V8" stroke="#333" stroke-width="1.800"/>',
 r(2.500,4.500,15,11)+'<text x="11.500" y="13.800" font-size="9" text-anchor="middle" fill="#2b88c8" textLength="12" lengthAdjust="spacingAndGlyphs">123</text>'+bolt(-1,-1,.62),
 r(9.500,1.500,6,5,'#fff','#777')+r(1.500,10.500,6,6,'#fff','#777')+fun+bolt(-1,-1,.62),
 '<path d="M5 1.500h12.500v16H.5V9" fill="#fff" stroke="#0f6cbd"/><path d="M7 17q1-5 4-6t3-9.500h3.500V13l-4 1-1 3.500z" fill="#83beec" stroke="#0f6cbd"/><path d="M3 10Q0 6 0 3t3-3.500T6 3 3 10z" fill="#d8700f"/><circle cx="3" cy="2.800" r="1" fill="#fff"/><circle cx="16" cy="16" r="2.300" fill="#d8700f"/>',
 '<g stroke="#8a3fa0" stroke-width="1.200" fill="#faf2fb"><rect x="5.500" y=".8" width="7" height="7" rx="1.500" transform="rotate(45 9 4.300)"/><rect x="5.500" y="10.200" width="7" height="7" rx="1.500" transform="rotate(45 9 13.700)"/><rect x=".8" y="5.500" width="7" height="7" rx="1.500" transform="rotate(45 4.300 9)"/><rect x="10.200" y="5.500" width="7" height="7" rx="1.500" transform="rotate(45 13.700 9)"/></g>',
 '<path d="M.5 1.500h10.500L17.500 9 11 16.500H.5L7 9zM4 5.500h7.500M9 9l5.500-3.500M9 9l-5.500 7.500M14 9l-6 7.500" fill="#fff" stroke="#2b88c8" stroke-width="1.200"/>'
];
define('viz-pane', `:host{width:182px;height:494px;background:#f3f2f1;border-left:1px solid #d8d6d4;border-right:1px solid #d8d6d4;padding:0;position:relative;display:flex;flex-direction:column}
.h{display:flex;align-items:center;height:36px;padding:0 4px 0 8px;font-size:15.500px;font-weight:600;justify-content:space-between}
.b{font-weight:600;padding-left:8px;height:19px;line-height:17px}
.grid{display:grid;grid-template-columns:repeat(6,28px);grid-auto-rows:28px;padding:6px 0 0 6px;place-items:center;height:203px}
.grid svg{overflow:visible}.dots{height:32px;padding:0 0 0 11px;letter-spacing:2.600px;font-weight:700;line-height:18px;border-bottom:1px solid #d2d0ce}
.w{background:#fff;border:1px dashed #c0bebc;width:170px;height:27px;margin:3px 0 0 4px;display:flex;align-items:center;padding-left:10px;flex:none;font-size:11.800px}
.r{display:flex;align-items:center;justify-content:space-between;padding:0 22px 0 12px;height:27px;font-size:11.600px}
.d{font-weight:600;color:#555;height:23px;padding-left:12px;line-height:22px;margin-top:8px;font-size:11.800px}
.tg{width:32px;height:16px;border:1px solid #777;border-radius:9px;display:flex;align-items:center;font-size:9.500px;line-height:12px;background:#fff;padding:0 4px;gap:2px;color:#605e5c}
.tg i{width:8px;height:8px;flex:none;border-radius:50%;background:#605e5c}.on{background:#117865;color:#fff;border-color:#117865}.on i{background:#fff}
.sb{position:absolute;right:0;top:361px;width:6px;height:125px;border-radius:3px;background:#cfcdcb}`,
`<div class="h">${T(99,'Visualizations')}${P(1075,167,20,24,'<path d="M1079.500 173.500l6 6-6 6M1085.500 173.500l6 6-6 6" stroke="#333" stroke-width="1.100"/>')}</div>
<div class="b">${T(61,'Build visual')}</div>
${P(919,216,180,46,'<rect x="927" y="217" width="32" height="32" fill="#d2d0ce" rx="1"/><path d="M931 221.500h19" stroke="#222"/><path d="M931.500 226h23v7h-23zM931.500 237h23v7h-23z" fill="#117865" stroke="#222" stroke-dasharray="2 1"/><path d="M1010 244.500h-13v-23h9l6 6v4M1006.500 221.500v6h5.500" stroke="#333" fill="#fafafa"/><path d="M1020.500 229.500l-8 9.500M1020.500 229.500l-6 11" stroke="#333" stroke-width="1.300"/><path d="M1011 238.500q-3 0-3.500 3t-2.500 3.500q5 1.500 8-1 1.500-2 .5-4z" fill="#ddd" stroke="#333"/><path d="M919 261.500h17l7-7 7.500 7h149" stroke="#888"/>')}
<div class="grid">${V.map(v => `<svg width="18" height="18" viewBox="0 0 18 18" fill="none">${v}</svg>`).join('')}</div>
<div class="dots">...</div>
<div class="w">${T(107,'Add data fields here')}</div>
<div class="d">${T(70,'Drill through')}</div>
<div class="r">${T(67,'Cross-report')}<span class="tg"><i></i>${T(13,'Off')}</span></div><div class="r">${T(74,'Keep all filters')}<span class="tg on">${T(12,'On')}<i></i></span></div>
<div class="w" style="margin-top:5px;padding-left:8px">${T(151,'Add drill-through fields here')}</div><div class="sb"></div>`);

const calc = '<rect x=".5" y=".5" width="11" height="12" rx="1.500" stroke="#333" stroke-width="1.200"/><path d="M3 3h6v2H3z" stroke="#333"/><path d="M2.500 7.500h7M2.500 10h7" stroke="#333" stroke-width="1.300" stroke-dasharray="1.600 1"/>';
const sig = '<path d="M10.500 2.500V1H1l5 5.500L1 12h9.500v-1.500" stroke="#333" stroke-width="1.200"/>';
const date = '<rect x=".5" y="1.500" width="11" height="10" rx="1.500" stroke="#444"/><path d="M.5 4.500h11M3 7h1M5.500 7h1M8 7h1M3 9h1M5.500 9h1" stroke="#444"/>';
define('data-pane', `:host{width:180px;height:494px;background:#f3f2f1;font-size:11.800px;color:#3b3a39}
.h{display:flex;align-items:center;height:36px;padding-left:8px;font-size:15.500px;font-weight:600;justify-content:space-between;color:#252423}
.s{margin:8px 0 9px 4px;width:172px;height:24px;background:#fff;border:1px solid #d2d0ce;border-bottom-color:#777;border-radius:3px;display:flex;align-items:center;font-size:12.600px;color:#605e5c}
.r{display:flex;align-items:center;height:24px}.r i{width:12px;height:12px;border:1px solid #777;border-radius:2px;background:#f9f8f7}.r .ic{margin:0 6px 0 8px}`,
`<div class="h">${T(34,'Data')}${P(1256,167,24,24,'<path d="M1260 173.500l6 6-6 6M1266 173.500l6 6-6 6" stroke="#333" stroke-width="1.100"/>')}</div>
<div class="s">${P(1105,206,30,22,'<circle cx="1125" cy="215.500" r="4.300" stroke="#444"/><path d="M1122 219l-4.500 4.500" stroke="#444"/>')}<fit-text w="42" style="margin-left:2px">Search</fit-text></div>
<div class="r">${P(1100,238,46,24,'<path d="M1114 247.500l5 5 5-5" stroke="#333"/><rect x="1129.500" y="245.500" width="11" height="10" rx="1.500" stroke="#333"/><path d="M1129.500 248.500h11M1129.500 252h11M1133 245.500v10M1137 245.500v10" stroke="#333"/>')}<fit-text w="64" style="margin-left:1px">RailwayData</fit-text></div>
${[['Avg_delay_min',78,calc],['Date',25,date,1],['Delay_Minutes',77,sig],['Destination',60,''],['Month Name',71,''],['Passengers',58,sig],['Revenue',45,sig],['Revenue_per_p...',89,calc],['Source',36,''],['Total_passengers',89,calc],['Total_revenue',73,calc],['Train_Name',62,''],['Train_No',46,sig]].map(f => `<div class="r"><svg width="44" height="24" fill="none">${f[3] ? '<path d="M31 6.500l5.500 5.500-5.500 5.500" stroke="#555"/>' : ''}</svg><i></i><svg class="ic" width="12" height="13" fill="none">${f[2]}</svg>${T(f[1], f[0])}</div>`).join('')}`);

define('status-bar', `:host{display:flex;align-items:center;height:25px;border-top:1px solid #d8d6d4;border-bottom:1px solid #000;background:#f3f2f1;color:#444;font-size:11.600px;padding-left:4px}`,
`${T(60,'Page 1 of 2')}<span style="flex:1"></span>${P(872,656,132,23,'<path d="M876 667.500h5" stroke="#444" stroke-width="1.500"/><path d="M885 667.500h100M935.500 665v5M991 667.500h8M995 663.500v8" stroke="#555"/><path d="M913 662h4v11h-4z" fill="#444"/>')}<fit-text w="23" style="margin:0 18px 0 8px">63%</fit-text>${P(1053,656,20,23,'<rect x="1054.500" y="662.500" width="15" height="11" stroke="#555"/><path d="M1057 667v-2h2M1065 665h2v2M1067 669v2h-2M1059 671h-2v-2" stroke="#555"/>')}<fit-text w="192" style="margin:1px 4px 0 11px">Update available (click to download)</fit-text>`);

/* ---------- taskbar ---------- */
const chrome = x => `<circle cx="${x}" cy="700" r="11.500" fill="#fbc116"/><path d="M${x-10} 694.200a11.500 11.500 0 0 1 20 0H${x}a6 6 0 0 0-5 3z" fill="#e33b2e"/><path d="M${x-10} 694.200a11.500 11.500 0 0 0 8.500 17.200l5-8.400a6 6 0 0 1-8.500 0z" fill="#1ea04c"/><circle cx="${x}" cy="700" r="5.600" fill="#fff"/><circle cx="${x}" cy="700" r="4.500" fill="#3f7fe8"/>`;
define('task-bar', `:host{display:flex;height:40px;background:#1c2b30;color:#fff;align-items:center;font-size:13px}
.s{width:288px;height:40px;background:#f1f1f1;border:1px solid #aaa;display:flex;align-items:center;justify-content:space-between;color:#333;font-size:14.700px}.hot{background:#465256}.u{box-shadow:inset 0 -2px #76b9ed}
.ck{display:flex;flex-direction:column;align-items:center;width:60px;margin-left:13px;font-size:11.700px}.ck *{line-height:17px}`,
`${P(0,680,48,40,'<path fill="#fff" d="M16 694.500l6.800-1v6.300H16zM23.800 693.400l8.200-1.200v7.600h-8.200zM16 700.800h6.800v6.400l-6.800-1zM23.800 700.800H32v7.700l-8.200-1.200z"/>')}
<div class="s">${P(50,681,36,38,'<circle cx="71" cy="697" r="5" stroke="#222" stroke-width="1.300"/><path d="M67 701l-7 7" stroke="#222" stroke-width="1.400"/>')}<fit-text w="128" style="margin-left:3px">Type here to search</fit-text>
${P(269,681,56,38,'<path d="M272 710q8-14 15-13t9 13z" fill="#8fdc9a"/><path d="M278 686l1.500 4 4 1.500-4 1.500-1.500 4-1.500-4-4-1.500 4-1.500zM283.500 684l.8 2 2 .8-2 .8-.8 2-.8-2-2-.8 2-.8z" fill="#ffc21c"/><rect x="291" y="688" width="24" height="24" rx="3" fill="#e4e4e6"/><path d="M291 694v-3q0-3 3-3h18q3 0 3 3v3z" fill="#4a6fe0"/><path d="M298 686v5M309 686v5" stroke="#888" stroke-width="2"/><path d="M313 716q-7-8-7-12t7-7 7 7-7 12z" fill="#e8581c"/><circle cx="313" cy="704" r="3" fill="#fff"/>','style="margin:0 11px 0 auto"')}</div>
${P(336,680,48,40,'<circle cx="360" cy="700" r="7" stroke="#fff" stroke-width="2.400"/>')}
${P(384,680,48,40,'<g stroke="#fff" stroke-width="1.200"><path d="M401 692v2.500h9V692M401 708v-2.500h9v2.500M401.500 697.500h8v5h-8zM414.500 692v3M414.500 699v9"/></g><path d="M413 696h3v3h-3z" fill="#fff"/>')}
${P(432,680,44,40,'<defs><linearGradient id="ed" x1="0" y1="0" x2="1" y2="0"><stop offset="0" stop-color="#1fa8e8"/><stop offset="1" stop-color="#58d860"/></linearGradient></defs><circle cx="455" cy="700" r="12" fill="#0f5fb8"/><path d="M443 699q1-11 12-11t12 10q0 6-7 6-4-.500-4-3 2-4-3-5-6 0-10 3z" fill="url(#ed)"/><path d="M455 703q3 6 10 4-4 5-10 5z" fill="#1a86d8"/><circle cx="449" cy="706" r="5.500" fill="#ccc"/><circle cx="449" cy="704.500" r="2" fill="#666"/><path d="M445.500 709q3.500-4 7 0z" fill="#666"/>')}
${P(476,680,40,40,'<path d="M485 692h8l2 2h11v16h-21z" fill="#ffd04f"/><path d="M485 691h9v3h-9z" fill="#e8a21c"/><path d="M489 701h14v9h-3v-4h-8v4h-3z" fill="#3a8edc"/>')}
${P(516,680,41,40,'<path d="M541 688q-10 4-10 8.500 0 2.500 3.500 5Q537 704 534 712q9-5 9-9.500 0-2.500-3.500-5Q537 695 541 688z" fill="#fff"/>')}
${P(557,680,41,40,'<path d="M574 690l14 4v11l-14-3z" fill="#49b4f2" stroke="#9bd6fa" stroke-width=".8"/><path d="M579 704l4 1v2l-4-1z" fill="#aab"/><path d="M567 704l13 3.500-3 2.500-10-3z" fill="#d5dbe0"/><path d="M582 708l4 1-1 1.500-4-1z" fill="#d5dbe0"/>')}
${P(598,680,42,40,chrome(619))}
${P(640,680,41,40,'<rect x="648" y="689" width="23" height="22" fill="#23536e" rx="2"/><path d="M651 692q8 0 11 8 5 2 7 6-5-1-6 3-2-5-6-5-2 2-3 0-3-6-3-12z" stroke="#a9d4ea" stroke-width="1.300"/>')}
${P(681,680,39,40,'<rect x="702" y="688" width="8" height="24" rx="1.500" fill="#c98f12"/><rect x="696.500" y="694" width="8" height="18" rx="1.500" fill="#e8b419"/><rect x="691" y="700" width="8" height="12" rx="1.500" fill="#ffd84a"/>','class="hot u"')}
${P(720,680,40,40,chrome(740),'class="u"')}
${P(760,680,40,40,'<rect x="768" y="688" width="24" height="24" rx="2" fill="#34b45e"/><circle cx="780" cy="699.500" r="8" stroke="#fff" stroke-width="1.600"/><path d="M772 708l1.500-5 3 4z" fill="#fff"/><path d="M776.500 695q-1.500 3 2 6t6 1.500l.5-2-2.500-1-1.300 1q-2-1-2.600-2.500l1-1-.8-2.300z" fill="#fff"/>','class="u"')}
${P(800,680,112,40,'<circle cx="842" cy="700" r="11" fill="#2f9ae0" stroke="#fff" stroke-width="1.500"/><text x="842" y="705.500" font-size="15" font-weight="700" text-anchor="middle" fill="#fff">?</text><path d="M846 702l5 9h-10z" fill="#ffcc2a" stroke="#333" stroke-width=".5"/><circle cx="897" cy="698" r="6.500" fill="#f79a1e"/><path d="M884 711q-5-1-4-5t5-4q2-5 7-4t6 5q6 0 6 4t-4 4z" fill="#bcd6f8"/>')}
${T(29,'29°C')}
${P(941,680,186,40,'<g stroke="#fff" stroke-width="1.300"><path d="M959.500 703l5.500-5.500 5.500 5.500"/><path d="M982.500 696.500h13v8h-13zM996.500 699v3"/><path d="M984.500 698.500h9v4h-9z" fill="#fff"/><path d="M1029 698h3l3.500-3v11l-3.500-3h-3zM1038 698q1.500 2.500 0 5M1041 696q3 4.500 0 9M1044 694q4 6 0 12"/><path d="M1056.500 696.500h7v8h-7zM1063.500 699l3-2v7l-3-2M1057 693q3-2 7 0M1057 708q3 2 7 0"/><path d="M1077.500 695.500l15-2v13l-15 1.500zM1082 699l5-1-2 3h3l-5 3"/></g><g stroke="#c8cccd" stroke-width="1.300"><path d="M1009 706q1-9 11-11M1012 706q1-6 8-8M1015 706q1-3 5-5"/><path d="M1101 693.500h9M1101 697.500h9M1101 701.500h6M1109 699h3l4-3v11l-4-3h-3z"/></g><circle cx="1019" cy="705" r="1.500" fill="#fff"/><circle cx="1089" cy="705" r="3.500" fill="#2f7fd0"/>')}
<fit-text w="23" style="font-size:11.700px">ENG</fit-text><div class="ck">${T(27,'17:24')}${T(59,'03-10-2025')}</div>
${P(1223,680,57,40,'<path d="M1239 692h16v12h-8l-4 4v-4h-4z" fill="#fff"/><path d="M1242 695.500h10M1242 698.500h10M1242 701.500h6" stroke="#1c2b30"/><circle cx="1254.500" cy="707" r="8" fill="#4a4f52" stroke="#999"/><text x="1254.500" y="711.500" font-size="12" text-anchor="middle" fill="#fff">1</text><path d="M1275.500 680v40" stroke="#5a666a"/>')}`);

define('report-app', `:host{width:1280px;height:720px;display:flex;flex-direction:column;overflow:hidden}.m{display:flex;height:494px}.c{width:878px}.x{display:flex}report-canvas{width:844px}title-bar,status-bar,task-bar{flex:none}app-ribbon{flex:none}`,
`<title-bar></title-bar><app-ribbon></app-ribbon><div class="m"><nav-rail></nav-rail><div class="c"><div class="x"><report-canvas></report-canvas><filters-pane></filters-pane></div><page-tabs></page-tabs></div><viz-pane></viz-pane><data-pane></data-pane></div><status-bar></status-bar><task-bar></task-bar>`);
</script>
</body>
</html>
